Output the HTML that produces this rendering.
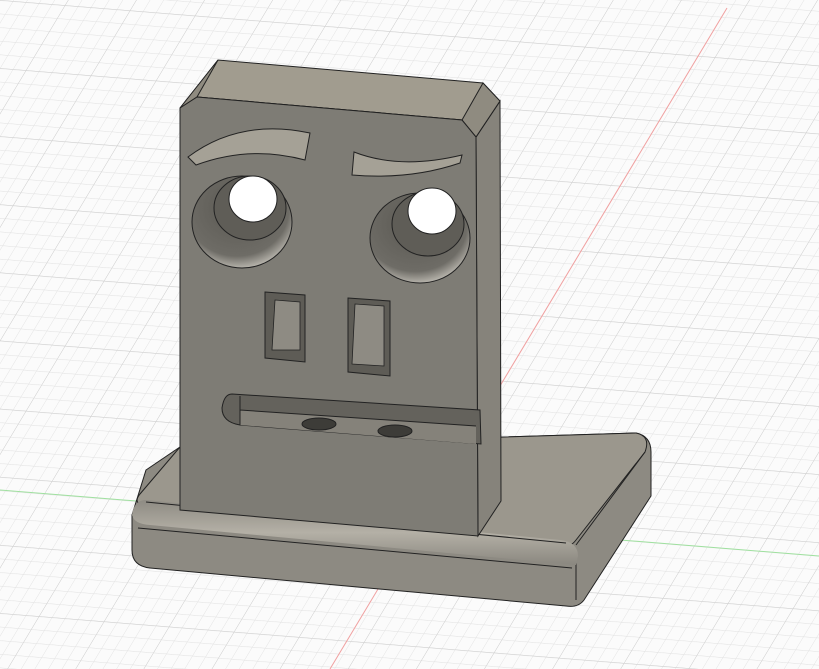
<!DOCTYPE html>
<html><head><meta charset="utf-8"><style>html,body{margin:0;padding:0;background:#fff;width:819px;height:669px;overflow:hidden}</style></head>
<body>
<svg width="819" height="669" viewBox="0 0 819 669" xmlns="http://www.w3.org/2000/svg">
<defs>
<pattern id="g1" width="13" height="13" patternUnits="userSpaceOnUse" patternTransform="matrix(1,0.08,-0.6,1,0,0)">
<path d="M0 0H13M0 0V13" stroke="#e2e2e2" stroke-width="1" fill="none"/>
</pattern>
<pattern id="g2" width="65" height="65" patternUnits="userSpaceOnUse" patternTransform="matrix(1,0.08,-0.6,1,0,0)">
<path d="M0 0H65M0 0V65" stroke="#cfcfcf" stroke-width="1" fill="none"/>
</pattern>
<radialGradient id="eye" cx="0.45" cy="0.35" r="0.65"><stop offset="0" stop-color="#5a5852"/><stop offset="0.8" stop-color="#6e6c66"/><stop offset="1" stop-color="#b5b2aa"/></radialGradient>
<linearGradient id="lip" x1="0" y1="0" x2="0" y2="1"><stop offset="0" stop-color="#8e8b83"/><stop offset="0.5" stop-color="#b4b0a6"/><stop offset="1" stop-color="#8a877f"/></linearGradient>
</defs>
<rect width="819" height="669" fill="#fbfbfb"/>
<rect width="819" height="669" fill="url(#g1)"/>
<rect width="819" height="669" fill="url(#g2)"/>
<line x1="0" y1="490" x2="819" y2="556" stroke="#9fe09f" stroke-width="1"/>
<line x1="727" y1="8" x2="330" y2="669" stroke="#f0a0a0" stroke-width="1"/>
<!-- base -->
<path d="M146 470 L180 447 L636 433 Q651 436 651 452 L651 496 L584 600 Q578 608 566 606 L150 568 Q132 566 132 550 L132 515 Z" fill="#8d8a82" stroke="#222" stroke-width="1"/>
<path d="M180 447 L636 433 Q651 436 645 452 L576 540 Q570 548 560 547 L146 506 Q132 504 140 494 Z" fill="#9b978d" stroke="#222" stroke-width="1"/>
<path d="M146 506 L560 547 Q576 548 576 560 L576 600" fill="none" stroke="#222"/>
<path d="M132 515 Q134 500 146 500 L560 540 Q578 542 578 556 L576 565 L150 525 Q134 524 132 515Z" fill="url(#lip)" stroke="none"/>
<path d="M146 502 L566 543" stroke="#222" fill="none"/>
<path d="M138 528 L572 568" stroke="#222" fill="none"/>
<path d="M576 545 L645 452" stroke="#222" fill="none"/>
<!-- side face -->
<path d="M476 137 L500 101 L501 501 L478 536 Z" fill="#86837b" stroke="#222"/>
<!-- top -->
<path d="M180 108 L218 60 L483 83 L500 101 L476 137 L462 120 L197 97 Z" fill="#a19c8f" stroke="#222"/>
<path d="M197 97 L462 120 L476 137" fill="none" stroke="#222"/>
<path d="M180 108 L197 97 L218 60 Z" fill="#8f8b80" stroke="#222"/>
<path d="M462 120 L483 83 L500 101 L476 137 Z" fill="#8f8b80" stroke="#222"/>
<!-- front -->
<path d="M180 108 L197 97 L462 120 L476 137 L478 536 L180 510 Z" fill="#7e7c75" stroke="#222"/>
<!-- eyebrows -->
<path d="M188 157 Q240 118 310 133 L305 160 Q250 145 196 165 Z" fill="#a5a196" stroke="#222"/>
<path d="M354 152 Q400 170 462 155 L460 163 Q410 180 352 175 Z" fill="#a5a196" stroke="#222"/>
<!-- eyes -->
<ellipse cx="242" cy="222" rx="50" ry="46" fill="url(#eye)" stroke="#222"/>
<ellipse cx="250" cy="208" rx="36" ry="32" fill="#5f5d57" stroke="#222"/>
<ellipse cx="253" cy="199" rx="24" ry="23" fill="#fff" stroke="#222"/>
<ellipse cx="420" cy="238" rx="50" ry="45" fill="url(#eye)" stroke="#222"/>
<ellipse cx="428" cy="224" rx="36" ry="32" fill="#5f5d57" stroke="#222"/>
<ellipse cx="432" cy="211" rx="24" ry="23" fill="#fff" stroke="#222"/>
<!-- nose -->
<path d="M265 292 L305 295 L305 362 L265 358 Z" fill="#5e5c56" stroke="#222"/>
<path d="M275 300 L300 302 L300 350 L272 350 Z" fill="#8e8b83" stroke="#222" stroke-width="0.8"/>
<path d="M348 298 L390 301 L390 376 L348 372 Z" fill="#5e5c56" stroke="#222"/>
<path d="M355 304 L384 306 L384 366 L352 364 Z" fill="#8e8b83" stroke="#222" stroke-width="0.8"/>
<!-- mouth -->
<path d="M232 394 L480 410 L481 444 L240 425 Q222 422 222 408 Q224 394 232 394 Z" fill="#64625c" stroke="#222"/>
<path d="M240 410 L476 426 L476 444 L240 425 Z" fill="#85827a" stroke="none"/>
<path d="M240 396 L240 425 M240 410 L476 426" stroke="#222" fill="none"/>
<ellipse cx="319" cy="424" rx="17" ry="6" fill="#3d3c38" stroke="#222"/>
<ellipse cx="395" cy="431" rx="17" ry="6" fill="#3d3c38" stroke="#222"/>
</svg>
</body></html>
